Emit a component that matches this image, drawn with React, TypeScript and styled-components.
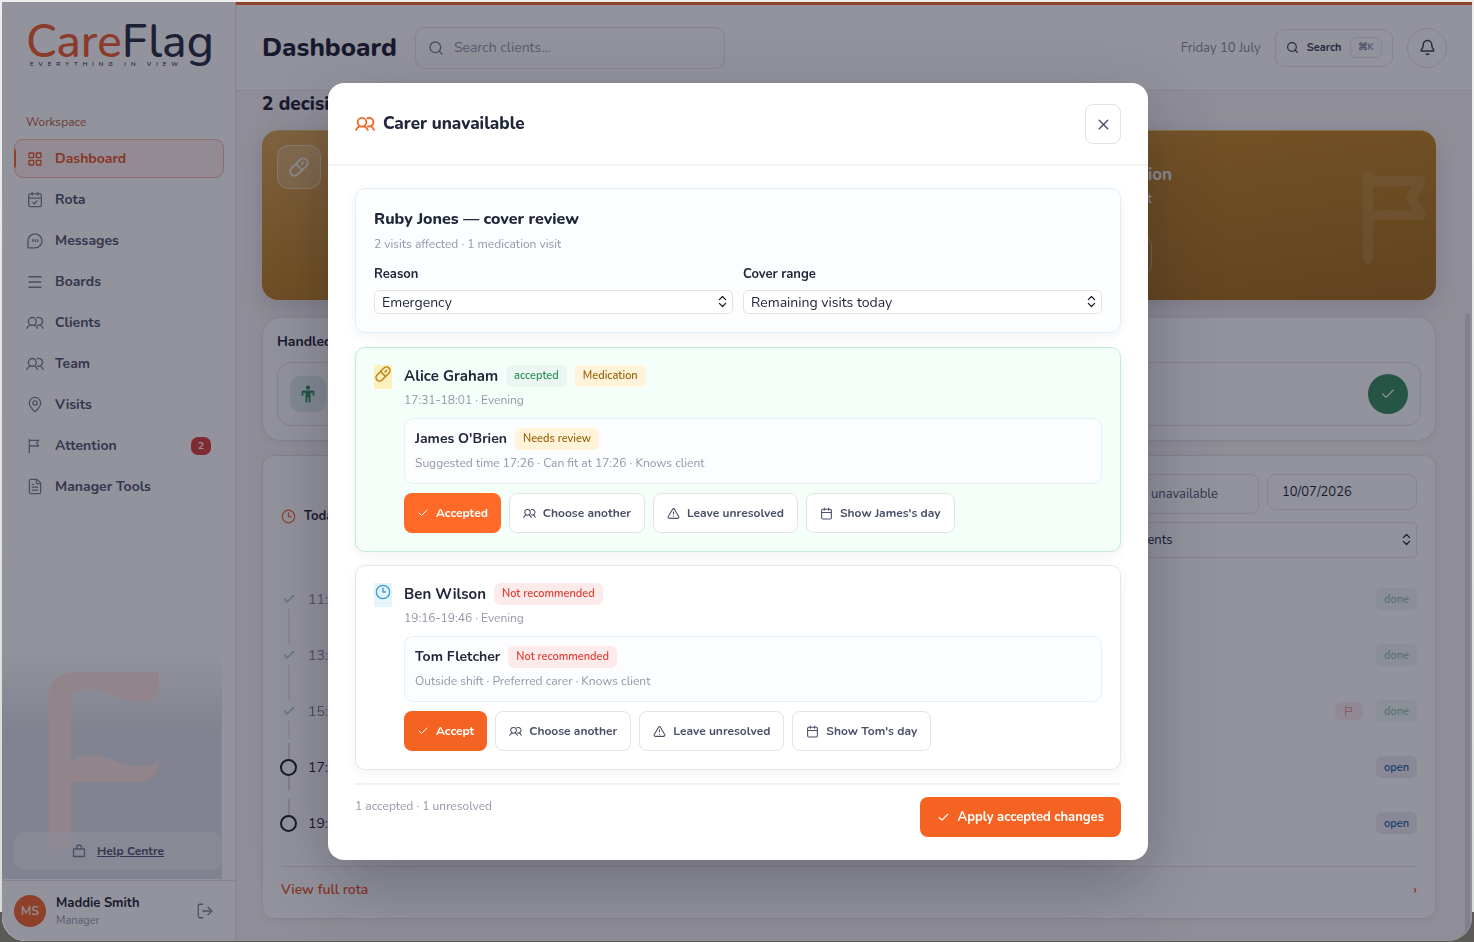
import React from "react";
import styled, { createGlobalStyle, css } from "styled-components";
import {
  Bell,
  Calendar,
  CalendarCheck,
  Check,
  ChevronsUpDown,
  Clock3,
  FileText,
  LayoutGrid,
  LogOut,
  MapPin,
  Menu,
  Search,
  TriangleAlert,
  X,
} from "lucide-react";

const ink = "#1a1a2e";
const slate = "#4b5068";
const muted = "#9496a8";
const orange = "#f56322";
const line = "#e6e3df";

const GlobalStyle = createGlobalStyle`
  * { box-sizing: border-box; }
  body {
    margin: 0;
    background: linear-gradient(#eeeeec 0, #d9dbd6 912px, #5c5a56 912px);
    color: ${ink};
    font-family: Nunito, Lato, sans-serif;
    font-size: 14px;
  }
  button, input, select { font-family: inherit; color: inherit; margin: 0; }
  h1, h2, h3, h4, p, ul { margin: 0; padding: 0; }
  a { color: inherit; }
`;

/* ---------- icons ---------- */

const UsersIcon = ({ size = 18, stroke = 1.4 }: { size?: number; stroke?: number }) => (
  <svg width={size} height={size} viewBox="0 0 18 18" fill="none" stroke="currentColor" strokeWidth={stroke} strokeLinecap="round" strokeLinejoin="round">
    <circle cx="6.3" cy="7.4" r="3.9" />
    <path d="M.9 14.300c.7-1.500 1.800-2.500 3.200-3.300M8.500 11c1.300.8 2.300 1.800 3 3.300" />
    <path d="M11.200 3.700a3.900 3.900 0 1 1 1.400 7.500h-1M14.300 11c1.200.7 2.100 1.700 2.800 3.300" />
  </svg>
);

const FlagIcon = ({ size = 16, stroke = 1.3 }: { size?: number; stroke?: number }) => (
  <svg width={size} height={size} viewBox="0 0 16 16" fill="none" stroke="currentColor" strokeWidth={stroke} strokeLinecap="round" strokeLinejoin="round">
    <path d="M2.300 1.500v13.200M2.300 2.300h9.400l-2 2.800 2 2.900H2.300" />
  </svg>
);

const MessageIcon = () => (
  <svg width="18" height="18" viewBox="0 0 18 18" fill="none" stroke="currentColor" strokeWidth="1.4" strokeLinecap="round" strokeLinejoin="round">
    <path d="M2 15.8V9a7 7 0 1 1 7 6.9z" />
    <path d="M6.800 7.800v1.600M9.200 7.800v1.600M11.600 7.800v1.600" />
  </svg>
);

const BagIcon = () => (
  <svg width="14" height="14" viewBox="0 0 14 14" fill="none" stroke="currentColor" strokeWidth="1.3" strokeLinejoin="round">
    <path d="M1.5 5h11v7.5h-11zM4.300 5c0-2.500 1-4 2.700-4s2.700 1.500 2.700 4" />
  </svg>
);

const CapsuleIcon = ({ size = 20 }: { size?: number }) => (
  <svg width={size} height={size} viewBox="0 0 20 20" fill="none" stroke="currentColor" strokeWidth="1.8" strokeLinecap="round">
    <g transform="rotate(-45 10 10)">
      <rect x="-0.500" y="5.600" width="21" height="8.800" rx="4.400" />
      <path d="M10 5.600v8.800M13.600 10h2.800" />
    </g>
  </svg>
);

const PersonIcon = () => (
  <svg width="16" height="18" viewBox="0 0 16 18" fill="currentColor">
    <circle cx="8" cy="2.600" r="2.200" />
    <path d="M3.600 5.600h8.800c1.300 0 2 .8 2 2v3.200h-1.700V7.700h-2.200v9.700H8.700v-5H7.300v5H5.500V7.700H3.300v3.100H1.600V7.600c0-1.200.7-2 2-2z" />
  </svg>
);

const FlagMark = styled.svg`
  position: absolute;
  left: 47px;
  top: 22px;
  width: 110px;
  height: 177px;
`;

/* ---------- shell ---------- */

const Frame = styled.div`
  height: 100vh;
  padding: 2px 2px 1px;
`;

const Shell = styled.div`
  position: relative;
  height: 100%;
  display: grid;
  grid-template-columns: 234px minmax(0, 1fr);
  background: #f8f6f5;
  border-radius: 0 0 24px 24px;
  overflow: hidden;
`;

const Sidebar = styled.aside`
  display: flex;
  flex-direction: column;
  min-height: 0;
  background: #fff;
  border-right: 1px solid ${line};
`;

const Logo = styled.svg`
  width: 200px;
  height: 56px;
  margin: 18px 0 37px 24px;
  flex: none;
  overflow: visible;
`;

const NavLabel = styled.p`
  padding-left: 24px;
  font-size: 12px;
  line-height: 18px;
  color: #b45a34;
`;

const NavList = styled.ul`
  list-style: none;
  display: flex;
  flex-direction: column;
  gap: 2px;
  margin: 8px 11px 0 12px;
`;

const NavLink = styled.a<{ $active?: boolean }>`
  display: flex;
  align-items: center;
  gap: 11px;
  height: 39px;
  padding: 0 12px 0 11px;
  border: 1px solid transparent;
  border-radius: 9px;
  font-weight: 700;
  font-size: 14px;
  color: ${slate};
  text-decoration: none;
  position: relative;
  svg { color: #7c7e93; width: 18px; flex: none; }
  ${(p) =>
    p.$active &&
    css`
      color: #ea4f1c;
      background: #fdf0ec;
      border-color: #f3b6a2;
      svg { color: #ea4f1c; }
      &::before {
        content: "";
        position: absolute;
        left: -1px;
        top: 9px;
        bottom: 9px;
        width: 2px;
        background: ${orange};
        border-radius: 0 2px 2px 0;
      }
    `}
`;

const Count = styled.span`
  margin-left: auto;
  width: 20px;
  height: 18px;
  border-radius: 7px;
  background: #dc3a35;
  color: #fff;
  font-size: 10px;
  line-height: 18px;
  text-align: center;
`;

const HelpArea = styled.div`
  position: relative;
  margin: auto 13px 1px 0;
  height: 229px;
  display: flex;
  align-items: flex-end;
  padding: 0 0 9px 12px;
  background: linear-gradient(rgba(223, 224, 230, 0), #dfe0e6 36%);
`;

const HelpLink = styled.a`
  position: relative;
  flex: 1;
  height: 38px;
  display: flex;
  align-items: center;
  justify-content: center;
  gap: 11px;
  border-radius: 10px;
  background: rgba(244, 244, 246, 0.6);
  color: ${slate};
  font-size: 12px;
  font-weight: 700;
  svg { color: #7c7e93; }
`;

const UserBar = styled.div`
  height: 61px;
  flex: none;
  display: flex;
  align-items: center;
  gap: 10px;
  padding: 0 21px 0 12px;
  border-top: 1px solid ${line};
`;

const Avatar = styled.span`
  width: 32px;
  height: 32px;
  border-radius: 50%;
  background: ${orange};
  color: #fff;
  font-size: 12px;
  font-weight: 600;
  line-height: 32px;
  text-align: center;
`;

const UserText = styled.div`
  flex: 1;
  padding-top: 2px;
  strong { display: block; font-size: 13px; line-height: 18px; }
  span { font-size: 11px; line-height: 18px; color: ${muted}; display: block; }
`;

const PlainButton = styled.button`
  border: 0;
  padding: 0;
  background: none;
  color: #7c7e93;
  display: flex;
`;

const Main = styled.main`
  display: flex;
  flex-direction: column;
  min-width: 0;
  min-height: 0;
  border-top: 3px solid ${orange};
`;

const TopBar = styled.header`
  height: 86px;
  flex: none;
  display: flex;
  align-items: center;
  padding: 0 25px 0 26px;
  background: #fff;
  border-bottom: 1px solid ${line};
`;

const PageTitle = styled.h1`
  font-size: 26px;
  line-height: 36px;
  font-weight: 800;
`;

const ClientSearch = styled.label`
  width: 310px;
  height: 42px;
  margin: 0 auto 0 18px;
  display: flex;
  align-items: center;
  gap: 10px;
  padding: 0 12px;
  border: 1px solid ${line};
  border-radius: 10px;
  color: #7c7e93;
  input {
    flex: 1;
    min-width: 0;
    border: 0;
    outline: 0;
    background: none;
    font-size: 14px;
    padding: 0;
  }
  input::placeholder { color: ${muted}; opacity: 1; }
`;

const DateText = styled.span`
  font-size: 13px;
  color: #85879b;
`;

const SearchButton = styled.button`
  height: 38px;
  display: flex;
  align-items: center;
  gap: 8px;
  margin: 0 14px;
  padding: 0 10px;
  background: #fff;
  border: 1px solid ${line};
  border-radius: 10px;
  font-size: 11px;
  font-weight: 700;
  color: #34374f;
  kbd {
    font: inherit;
    font-weight: 600;
    font-size: 10px;
    color: #85879b;
    border: 1px solid ${line};
    border-radius: 6px;
    padding: 0 7px;
    line-height: 19px;
  }
`;

const RoundButton = styled.button`
  width: 40px;
  height: 40px;
  display: grid;
  place-items: center;
  padding: 0;
  border: 1px solid ${line};
  border-radius: 50%;
  background: #fff;
  color: #34374f;
`;

const Scroller = styled.div`
  flex: 1;
  min-height: 0;
  display: flex;
  overflow: hidden;
`;

const Content = styled.div`
  flex: 1;
  min-width: 0;
  padding: 0 29px 0 26px;
`;

const ScrollThumb = styled.div`
  width: 5px;
  margin: 222px 2px 0 0;
  border-radius: 3px 3px 0 0;
  background: #d9d9e4;
`;

const SectionTitle = styled.h2`
  font-size: 19px;
  line-height: 26px;
  font-weight: 800;
`;

const DecisionCard = styled.section`
  height: 170px;
  margin-top: 13px;
  padding: 14px 15px;
  display: flex;
  border-radius: 16px;
  border-top: 1px solid #e5bc62;
  background: linear-gradient(172deg, #dca650 0%, #bf811c 45%, #a06812 100%);
  color: #f5f0ea;
  box-shadow: 0 8px 24px rgba(26, 26, 46, 0.14);
`;

const CardIcon = styled.span`
  width: 44px;
  height: 44px;
  display: grid;
  place-items: center;
  border-radius: 12px;
  border: 1px solid rgba(255, 255, 255, 0.4);
  background: rgba(255, 255, 255, 0.2);
`;

const DecisionText = styled.div`
  flex: 1;
  display: flex;
  flex-direction: column;
  align-items: flex-end;
  padding-top: 19px;
  h3 { font-size: 17px; line-height: 22px; }
  p { margin-right: 20px; font-size: 13px; line-height: 26px; }
  button {
    margin: 24px 20px 0 0;
    height: 38px;
    padding: 0 16px;
    background: none;
    border: 1px solid rgba(255, 255, 255, 0.35);
    border-radius: 9px;
  }
`;

const CardFlag = styled.svg`
  flex: none;
  width: 66px;
  height: 94px;
  margin: 26px -8px 0 191px;
  color: rgba(255, 255, 255, 0.1);
`;

const Card = styled.section`
  background: #fff;
  border: 1px solid ${line};
  box-shadow: 0 2px 8px rgba(26, 26, 46, 0.06);
`;

const HandledCard = styled(Card)`
  height: 124px;
  margin-top: 17px;
  padding: 14px;
  border-radius: 18px;
  h3 { font-size: 14px; line-height: 20px; font-weight: 700; }
`;

const HandledRow = styled.div`
  height: 64px;
  margin-top: 10px;
  display: flex;
  align-items: center;
  justify-content: space-between;
  padding: 0 12px;
  border: 1px solid ${line};
  border-radius: 14px;
`;

const GreenTile = styled.span`
  width: 36px;
  height: 36px;
  display: grid;
  place-items: center;
  border-radius: 10px;
  background: #dfeee9;
  color: #2a8a5c;
`;

const GreenButton = styled.button`
  width: 40px;
  height: 40px;
  display: grid;
  place-items: center;
  padding: 0;
  border: 0;
  border-radius: 50%;
  background: #318a5c;
  color: #fff;
`;

const RotaCard = styled(Card)`
  margin-top: 14px;
  padding: 17px 18px 0;
  height: 464px;
  border-radius: 12px;
`;

const RotaHead = styled.div`
  display: flex;
  align-items: center;
  gap: 8px;
  height: 86px;
  svg { color: ${orange}; }
  h3 { flex: 1; font-size: 13px; font-weight: 700; }
`;

const Filters = styled.div`
  width: 342px;
  display: flex;
  flex-wrap: wrap;
  justify-content: flex-end;
  gap: 8px;
  > button {
    width: 184px;
    height: 40px;
    border: 1px solid ${line};
    border-radius: 8px;
    background: #fff;
    color: ${slate};
    font-size: 13px;
    padding: 0;
  }
  > input {
    width: 150px;
    height: 36px;
    padding: 0 14px;
    border: 1px solid ${line};
    border-radius: 9px;
    background: #fff;
    font-size: 13px;
  }
`;

const SelectBox = styled.span<{ $height: number; $width?: number }>`
  position: relative;
  display: block;
  width: ${(p) => (p.$width ? `${p.$width}px` : "100%")};
  select {
    display: block;
    appearance: none;
    width: 100%;
    height: ${(p) => p.$height}px;
    padding: 0 30px 0 ${(p) => (p.$height > 30 ? 13 : 7)}px;
    border: 1px solid ${line};
    border-radius: 5px;
    background: #fff;
    font-size: ${(p) => (p.$height > 30 ? 13 : 14)}px;
  }
  svg {
    position: absolute;
    right: 3px;
    top: calc(50% - 8px);
    color: ${ink};
    pointer-events: none;
  }
`;

const Timeline = styled.ul`
  list-style: none;
  margin-top: 12px;
`;

const VisitRow = styled.li<{ $done: boolean }>`
  height: 56px;
  display: flex;
  align-items: center;
  opacity: ${(p) => (p.$done ? 0.55 : 1)};
  time { flex: 1; padding-left: 12px; font-size: 14px; }
`;

const Marker = styled.span<{ $done: boolean }>`
  align-self: stretch;
  width: 15px;
  display: flex;
  flex-direction: column;
  align-items: center;
  padding: ${(p) => (p.$done ? "0" : "4px 0")};
  svg { color: #2a9461; margin: 3px 0; flex: none; }
`;

const Rail = styled.i<{ $hidden?: boolean }>`
  flex: 1;
  width: 2px;
  background: ${(p) => (p.$hidden ? "transparent" : "#dcd8d4")};
`;

const Ring = styled.span`
  width: 17px;
  height: 17px;
  flex: none;
  border: 2px solid ${ink};
  border-radius: 50%;
`;

const Status = styled.span<{ $kind: "done" | "open" | "flag" }>`
  display: inline-flex;
  align-items: center;
  justify-content: center;
  width: ${(p) => (p.$kind === "flag" ? 28 : 41)}px;
  height: ${(p) => (p.$kind === "flag" ? 18 : 22)}px;
  margin-left: 13px;
  border-radius: 6px;
  font-size: 11px;
  font-weight: 600;
  color: ${(p) => ({ done: "#2a9461", open: "#125f9e", flag: "#dc3a35" })[p.$kind]};
  background: ${(p) => ({ done: "#e4f0ee", open: "#ebebf3", flag: "#f8dcdc" })[p.$kind]};
`;

const RotaFoot = styled.a`
  display: flex;
  justify-content: space-between;
  margin-top: 15px;
  padding-top: 13px;
  border-top: 1px solid ${line};
  color: #ea4f1c;
  font-size: 14px;
  font-weight: 600;
  line-height: 20px;
  text-decoration: none;
`;

/* ---------- dialog ---------- */

const Backdrop = styled.div`
  position: absolute;
  inset: 0;
  display: grid;
  place-items: center;
  padding-left: 2px;
  background: rgba(26, 26, 46, 0.47);
`;

const Dialog = styled.section`
  width: min(820px, 94%);
  background: #fff;
  color: #20273a;
  border-radius: 16px;
  box-shadow: 0 24px 70px rgba(26, 26, 46, 0.3);
`;

const DialogHead = styled.header`
  height: 83px;
  display: flex;
  align-items: center;
  gap: 8px;
  padding: 1px 27px 0;
  border-bottom: 2px solid #f3f2f0;
  > svg { color: ${orange}; }
  h2 { flex: 1; font-size: 17px; line-height: 24px; font-weight: 800; }
`;

const CloseButton = styled.button`
  width: 36px;
  height: 40px;
  display: grid;
  place-items: center;
  padding: 0;
  border: 1px solid ${line};
  border-radius: 8px;
  background: #fff;
  color: ${slate};
`;

const DialogBody = styled.div`
  padding: 22px 27px 23px;
  display: flex;
  flex-direction: column;
  gap: 13px;
`;

const Panel = styled.article<{ $tone?: "blue" | "green" }>`
  border: 1px solid ${(p) => (p.$tone === "blue" ? "#e0effa" : p.$tone === "green" ? "#c3ead5" : "#e9e7e3")};
  background: ${(p) => (p.$tone === "blue" ? "#fcfdff" : p.$tone === "green" ? "#f4fffa" : "#fff")};
  border-radius: 10px;
  padding: 17px 18px 18px;
  box-shadow: 0 3px 12px rgba(26, 26, 46, 0.06);
`;

const Muted = styled.p`
  font-size: 12px;
  line-height: 18px;
  color: ${muted};
`;

const ReviewPanel = styled(Panel)`
  margin-bottom: 1px;
  h3 { font-size: 16px; line-height: 26px; font-weight: 800; margin-bottom: 3px; }
`;

const Fields = styled.div`
  display: grid;
  grid-template-columns: 1fr 1fr;
  gap: 10px;
  margin-top: 11px;
  label { display: block; font-size: 13px; line-height: 20px; font-weight: 700; }
  label > span { margin-top: 6px; font-weight: 400; }
`;

const VisitPanel = styled(Panel)`
  display: flex;
  align-items: flex-start;
  gap: 12px;
`;

const VisitIcon = styled.span<{ $kind: "med" | "time" }>`
  width: 18px;
  height: 24px;
  padding: 1px 0 0 1px;
  flex: none;
  color: ${(p) => (p.$kind === "med" ? "#b98212" : "#3c99dc")};
  background: ${(p) => (p.$kind === "med" ? "#fdefbe" : "#e6f4fd")};
`;

const VisitBody = styled.div`
  flex: 1;
  min-width: 0;
`;

const NameRow = styled.div<{ $small?: boolean }>`
  display: flex;
  align-items: center;
  gap: 8px;
  height: 22px;
  margin-bottom: 4px;
  h3, h4 { font-size: ${(p) => (p.$small ? 14 : 15)}px; font-weight: 700; line-height: 22px; }
`;

const Tag = styled.span<{ $tone: "green" | "amber" | "red" }>`
  padding: 0 8px;
  border-radius: 6px;
  font-size: 11px;
  font-weight: 600;
  line-height: 22px;
  color: ${(p) => ({ green: "#2c8f5c", amber: "#99650f", red: "#e03d35" })[p.$tone]};
  background: ${(p) => ({ green: "#ebf6f1", amber: "#fff3d9", red: "#fdeaea" })[p.$tone]};
`;

const Suggestion = styled.div`
  height: 66px;
  margin: 9px 0;
  padding: 9px 10px;
  border: 1px solid #e2f1fb;
  border-radius: 9px;
  background: #fcfdff;
`;

const Actions = styled.div`
  display: flex;
  gap: 8px;
`;

const Button = styled.button<{ $primary?: boolean; $bright?: boolean; $large?: boolean }>`
  height: 40px;
  display: flex;
  align-items: center;
  gap: 7px;
  padding: 0 ${(p) => (p.$large ? 16 : p.$primary ? 12 : 13)}px;
  border: 1px solid ${(p) => (p.$primary ? "transparent" : line)};
  border-radius: 8px;
  background: ${(p) => (p.$bright ? "#ff6a28" : p.$primary ? orange : "#fff")};
  color: ${(p) => (p.$primary ? "#fff" : slate)};
  font-size: ${(p) => (p.$large ? 13 : 12)}px;
  font-weight: 700;
`;

const DialogFoot = styled.footer`
  display: flex;
  justify-content: space-between;
  align-items: flex-start;
  padding-top: 12px;
  border-top: 2px solid #f3f2f0;
`;

/* ---------- data ---------- */

const nav = [
  { label: "Dashboard", icon: <LayoutGrid size={16} /> },
  { label: "Rota", icon: <CalendarCheck size={17} strokeWidth={1.8} /> },
  { label: "Messages", icon: <MessageIcon /> },
  { label: "Boards", icon: <Menu size={18} strokeWidth={1.7} /> },
  { label: "Clients", icon: <UsersIcon /> },
  { label: "Team", icon: <UsersIcon /> },
  { label: "Visits", icon: <MapPin size={17} strokeWidth={1.8} /> },
  { label: "Attention", icon: <FlagIcon />, count: 2 },
  { label: "Manager Tools", icon: <FileText size={17} strokeWidth={1.8} /> },
];

const rota = [
  { time: "11:00", status: "done" as const },
  { time: "13:00", status: "done" as const },
  { time: "15:00", status: "done" as const, flagged: true },
  { time: "17:31", status: "open" as const },
  { time: "19:16", status: "open" as const },
];

type TagInfo = { text: string; tone: "green" | "amber" | "red" };

const visits: {
  client: string;
  kind: "med" | "time";
  accepted: boolean;
  tags: TagInfo[];
  slot: string;
  carer: string;
  carerTag: TagInfo;
  detail: string;
  first: string;
}[] = [
  {
    client: "Alice Graham",
    kind: "med",
    accepted: true,
    tags: [
      { text: "accepted", tone: "green" },
      { text: "Medication", tone: "amber" },
    ],
    slot: "17:31-18:01 · Evening",
    carer: "James O'Brien",
    carerTag: { text: "Needs review", tone: "amber" },
    detail: "Suggested time 17:26 · Can fit at 17:26 · Knows client",
    first: "James",
  },
  {
    client: "Ben Wilson",
    kind: "time",
    accepted: false,
    tags: [{ text: "Not recommended", tone: "red" }],
    slot: "19:16-19:46 · Evening",
    carer: "Tom Fletcher",
    carerTag: { text: "Not recommended", tone: "red" },
    detail: "Outside shift · Preferred carer · Knows client",
    first: "Tom",
  },
];

export default function App() {
  return (
    <Frame>
      <GlobalStyle />
      <Shell>
        <Sidebar>
          <Logo viewBox="0 0 200 56" role="img" aria-label="CareFlag, everything in view">
            <text x="0" y="37" fontSize="46" fontWeight="500" fontFamily="Nunito, Lato, sans-serif">
              <tspan fill="#ee5a24">Care</tspan>
              <tspan fill="#20293c">Flag</tspan>
            </text>
            <text x="4" y="46" fontSize="6" fontWeight="600" fontFamily="Nunito, Lato, sans-serif" letterSpacing="5" fill="#20293c">
              EVERYTHING IN VIEW
            </text>
          </Logo>
          <NavLabel>Workspace</NavLabel>
          <nav>
            <NavList>
              {nav.map((n, i) => (
                <li key={n.label}>
                  <NavLink href="#" $active={i === 0}>
                    {n.icon}
                    {n.label}
                    {n.count && <Count>{n.count}</Count>}
                  </NavLink>
                </li>
              ))}
            </NavList>
          </nav>
          <HelpArea>
            <FlagMark viewBox="0 0 110 177" fill="#fbe2dc">
              <path d="M0 177V26C0 9 10 0 27 0h83v20c-3 6-10 9-20 9-22 0-32-12-50-12-8 0-14 2-18 6v67c6-4 12-7 20-7 18 0 29 12 48 12 8 0 14-2 20-6-2 14-10 21-22 21H22v67z" />
            </FlagMark>
            <HelpLink href="#">
              <BagIcon />
              Help Centre
            </HelpLink>
          </HelpArea>
          <UserBar>
            <Avatar>MS</Avatar>
            <UserText>
              <strong>Maddie Smith</strong>
              <span>Manager</span>
            </UserText>
            <PlainButton aria-label="Log out">
              <LogOut size={18} strokeWidth={1.7} />
            </PlainButton>
          </UserBar>
        </Sidebar>

        <Main>
          <TopBar>
            <PageTitle>Dashboard</PageTitle>
            <ClientSearch>
              <Search size={16} strokeWidth={2} />
              <input aria-label="Search clients" placeholder="Search clients..." />
            </ClientSearch>
            <DateText>Friday 10 July</DateText>
            <SearchButton>
              <Search size={13} strokeWidth={2.2} />
              Search
              <kbd>⌘K</kbd>
            </SearchButton>
            <RoundButton aria-label="Notifications">
              <Bell size={17} />
            </RoundButton>
          </TopBar>
          <Scroller>
            <Content>
              <SectionTitle>2 decisions</SectionTitle>
              <DecisionCard>
                <CardIcon>
                  <CapsuleIcon size={20} />
                </CardIcon>
                <DecisionText>
                  <h3>Medication</h3>
                  <p>1 visit</p>
                  <button>Review</button>
                </DecisionText>
                <CardFlag viewBox="0 0 66 94" fill="none" stroke="currentColor" strokeWidth="10" strokeLinecap="round" strokeLinejoin="round">
                  <path d="M5 88V5M5 10h53L48 27l10 17H5" />
                </CardFlag>
              </DecisionCard>
              <HandledCard>
                <h3>Handled</h3>
                <HandledRow>
                  <GreenTile>
                    <PersonIcon />
                  </GreenTile>
                  <GreenButton aria-label="Confirm">
                    <Check size={16} strokeWidth={1.7} />
                  </GreenButton>
                </HandledRow>
              </HandledCard>
              <RotaCard>
                <RotaHead>
                  <Clock3 size={15} />
                  <h3>Today</h3>
                  <Filters>
                    <button>Carer unavailable</button>
                    <input aria-label="Date" defaultValue="10/07/2026" />
                    <SelectBox $height={36} $width={317}>
                      <select aria-label="Clients">
                        <option>All clients</option>
                      </select>
                      <ChevronsUpDown size={15} />
                    </SelectBox>
                  </Filters>
                </RotaHead>
                <Timeline>
                  {rota.map((r, i) => {
                    const done = r.status === "done";
                    return (
                      <VisitRow key={r.time} $done={done}>
                        <Marker $done={done}>
                          <Rail $hidden={i === 0} />
                          {done ? <Check size={14} strokeWidth={2} /> : <Ring />}
                          <Rail $hidden={i === rota.length - 1} />
                        </Marker>
                        <time>{r.time}</time>
                        {r.flagged && (
                          <Status $kind="flag">
                            <FlagIcon size={11} />
                          </Status>
                        )}
                        <Status $kind={r.status}>{r.status}</Status>
                      </VisitRow>
                    );
                  })}
                </Timeline>
                <RotaFoot href="#">
                  View full rota<span>›</span>
                </RotaFoot>
              </RotaCard>
            </Content>
            <ScrollThumb />
          </Scroller>
        </Main>

        <Backdrop>
          <Dialog role="dialog" aria-modal="true" aria-labelledby="dialog-title">
            <DialogHead>
              <UsersIcon size={20} stroke={1.6} />
              <h2 id="dialog-title">Carer unavailable</h2>
              <CloseButton aria-label="Close">
                <X size={17} />
              </CloseButton>
            </DialogHead>
            <DialogBody>
              <ReviewPanel $tone="blue">
                <h3>Ruby Jones — cover review</h3>
                <Muted>2 visits affected · 1 medication visit</Muted>
                <Fields>
                  <label>
                    Reason
                    <SelectBox $height={24}>
                      <select>
                        <option>Emergency</option>
                      </select>
                      <ChevronsUpDown size={15} />
                    </SelectBox>
                  </label>
                  <label>
                    Cover range
                    <SelectBox $height={24}>
                      <select>
                        <option>Remaining visits today</option>
                      </select>
                      <ChevronsUpDown size={15} />
                    </SelectBox>
                  </label>
                </Fields>
              </ReviewPanel>
              {visits.map((v) => (
                <VisitPanel key={v.client} $tone={v.accepted ? "green" : undefined}>
                  <VisitIcon $kind={v.kind}>{v.kind === "med" ? <CapsuleIcon size={16} /> : <Clock3 size={16} />}</VisitIcon>
                  <VisitBody>
                    <NameRow>
                      <h3>{v.client}</h3>
                      {v.tags.map((t) => (
                        <Tag key={t.text} $tone={t.tone}>
                          {t.text}
                        </Tag>
                      ))}
                    </NameRow>
                    <Muted>{v.slot}</Muted>
                    <Suggestion>
                      <NameRow $small>
                        <h4>{v.carer}</h4>
                        <Tag $tone={v.carerTag.tone}>{v.carerTag.text}</Tag>
                      </NameRow>
                      <Muted>{v.detail}</Muted>
                    </Suggestion>
                    <Actions>
                      <Button $primary $bright={v.accepted}>
                        <Check size={12} />
                        {v.accepted ? "Accepted" : "Accept"}
                      </Button>
                      <Button>
                        <UsersIcon size={13} />
                        Choose another
                      </Button>
                      <Button>
                        <TriangleAlert size={13} />
                        Leave unresolved
                      </Button>
                      <Button>
                        <Calendar size={13} />
                        Show {v.first}'s day
                      </Button>
                    </Actions>
                  </VisitBody>
                </VisitPanel>
              ))}
              <DialogFoot>
                <Muted>1 accepted · 1 unresolved</Muted>
                <Button $primary $large>
                  <Check size={13} />
                  Apply accepted changes
                </Button>
              </DialogFoot>
            </DialogBody>
          </Dialog>
        </Backdrop>
      </Shell>
    </Frame>
  );
}
